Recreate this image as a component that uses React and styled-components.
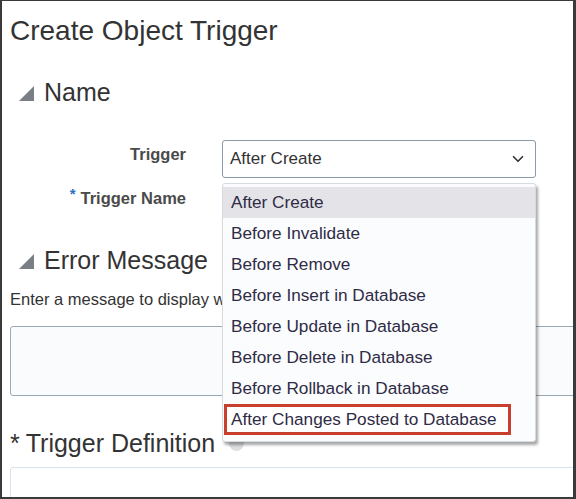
import React from "react";
import styled, { createGlobalStyle } from "styled-components";
import { ChevronDown } from "lucide-react";

const GlobalStyle = createGlobalStyle`
  html, body {
    margin: 0;
    padding: 0;
    background: #fff;
  }
  body {
    font-family: "Liberation Sans", Arial, sans-serif;
    color: #333;
  }
`;

const options = [
  "After Create",
  "Before Invalidate",
  "Before Remove",
  "Before Insert in Database",
  "Before Update in Database",
  "Before Delete in Database",
  "Before Rollback in Database",
  "After Changes Posted to Database",
];

const Frame = styled.div`
  box-sizing: border-box;
  width: 576px;
  height: 499px;
  border: 2px solid #3a3a3a;
  border-top-width: 1px;
  border-right-width: 3px;
  overflow: hidden;
  padding-left: 8px;
  display: flex;
  flex-direction: column;

  & > * {
    flex-shrink: 0;
  }
`;

const Title = styled.h1`
  margin: 14px 0 0;
  font-size: 28px;
  font-weight: normal;
  line-height: 32px;
  color: #333;
`;

const SectionHeader = styled.div`
  display: flex;
  align-items: center;
  gap: 10px;
  margin-top: ${p => p.$top}px;
  padding-left: ${p => (p.$flush ? 0 : 9)}px;
  font-size: 25px;
  line-height: 30px;
  color: #333;
`;

const Triangle = styled.span`
  width: 0;
  height: 0;
  border-left: 15px solid transparent;
  border-bottom: 15px solid #7a7f85;
  margin-top: 2px;
`;

const InfoDot = styled.span`
  width: 15px;
  height: 15px;
  border-radius: 50%;
  background: #dcdfe2;
  margin-left: 4px;
`;

const Form = styled.div`
  display: grid;
  grid-template-columns: 176px 314px;
  column-gap: 36px;
  row-gap: 6px;
  margin-top: 33px;
  align-items: center;
`;

const Label = styled.label`
  justify-self: end;
  font-size: 16.5px;
  font-weight: bold;
  color: #4a4a4a;
  display: flex;
  align-items: flex-start;
  gap: 5px;
  margin-top: -10px;
`;

const Star = styled.span`
  color: #2f6fc0;
  font-size: 15px;
  line-height: 10px;
`;

const SelectWrap = styled.div`
  position: relative;
`;

const Select = styled.div`
  box-sizing: border-box;
  height: 38px;
  border: 1px solid #8a9aa8;
  border-radius: 3px;
  background: #fff;
  display: flex;
  align-items: center;
  justify-content: space-between;
  padding: 0 8px 0 7px;
  font-size: 17px;
  color: #333;
`;

const Menu = styled.ul`
  position: absolute;
  top: 43px;
  left: 0;
  width: 314px;
  box-sizing: border-box;
  margin: 0;
  padding: 3px 0 6px;
  list-style: none;
  background: #fbfcfe;
  border: 1px solid #d6dbe0;
  border-radius: 3px;
  box-shadow: 2px 3px 3px rgba(0, 0, 0, 0.35);
  z-index: 2;
`;

const Item = styled.li`
  box-sizing: border-box;
  height: 31px;
  display: flex;
  align-items: center;
  padding-left: 8px;
  font-size: 17.2px;
  color: #2f2b45;
  white-space: nowrap;
  background: ${p => (p.$active ? "#e4e4e8" : "transparent")};
  ${p =>
    p.$marked &&
    `
    margin: 0 24px 0 1px;
    border: 3px solid #c8402d;
    padding-left: 4px;
    background: #fff;
  `}
`;

const FieldStub = styled.div`
  height: 38px;
`;

const HelpText = styled.p`
  margin: 14px 0 0 0;
  font-size: 16.5px;
  line-height: 20px;
  color: #333;
  white-space: nowrap;
`;

const TextArea = styled.div`
  margin-top: 17px;
  height: 70px;
  width: 600px;
  box-sizing: border-box;
  border: 1px solid #9aa9b6;
  border-radius: 3px;
  background: #fafbfd;
`;

const Required = styled.span`
  margin-right: 6px;
`;

const DefinitionBox = styled.div`
  margin-top: 9px;
  height: 60px;
  width: 600px;
  border: 1px solid #d7e2ec;
  border-radius: 3px;
  background: #fff;
`;

export default function App() {
  return (
    <>
      <GlobalStyle />
      <Frame>
        <Title>Create Object Trigger</Title>
        <SectionHeader $top={30}>
          <Triangle />
          Name
        </SectionHeader>
        <Form>
          <Label>Trigger</Label>
          <SelectWrap>
            <Select>
              After Create
              <ChevronDown size={18} strokeWidth={2.2} color="#333" />
            </Select>
            <Menu>
              {options.map((o, i) => (
                <Item key={o} $active={i === 0} $marked={i === options.length - 1}>
                  {o}
                </Item>
              ))}
            </Menu>
          </SelectWrap>
          <Label>
            <Star>*</Star>
            Trigger Name
          </Label>
          <FieldStub />
        </Form>
        <SectionHeader $top={23}>
          <Triangle />
          Error Message
          <InfoDot />
        </SectionHeader>
        <HelpText>Enter a message to display when the trigger fails.</HelpText>
        <TextArea />
        <SectionHeader $top={32} $flush>
          <span>
            <Required>*</Required>Trigger Definition
          </span>
          <InfoDot />
        </SectionHeader>
        <DefinitionBox />
      </Frame>
    </>
  );
}
